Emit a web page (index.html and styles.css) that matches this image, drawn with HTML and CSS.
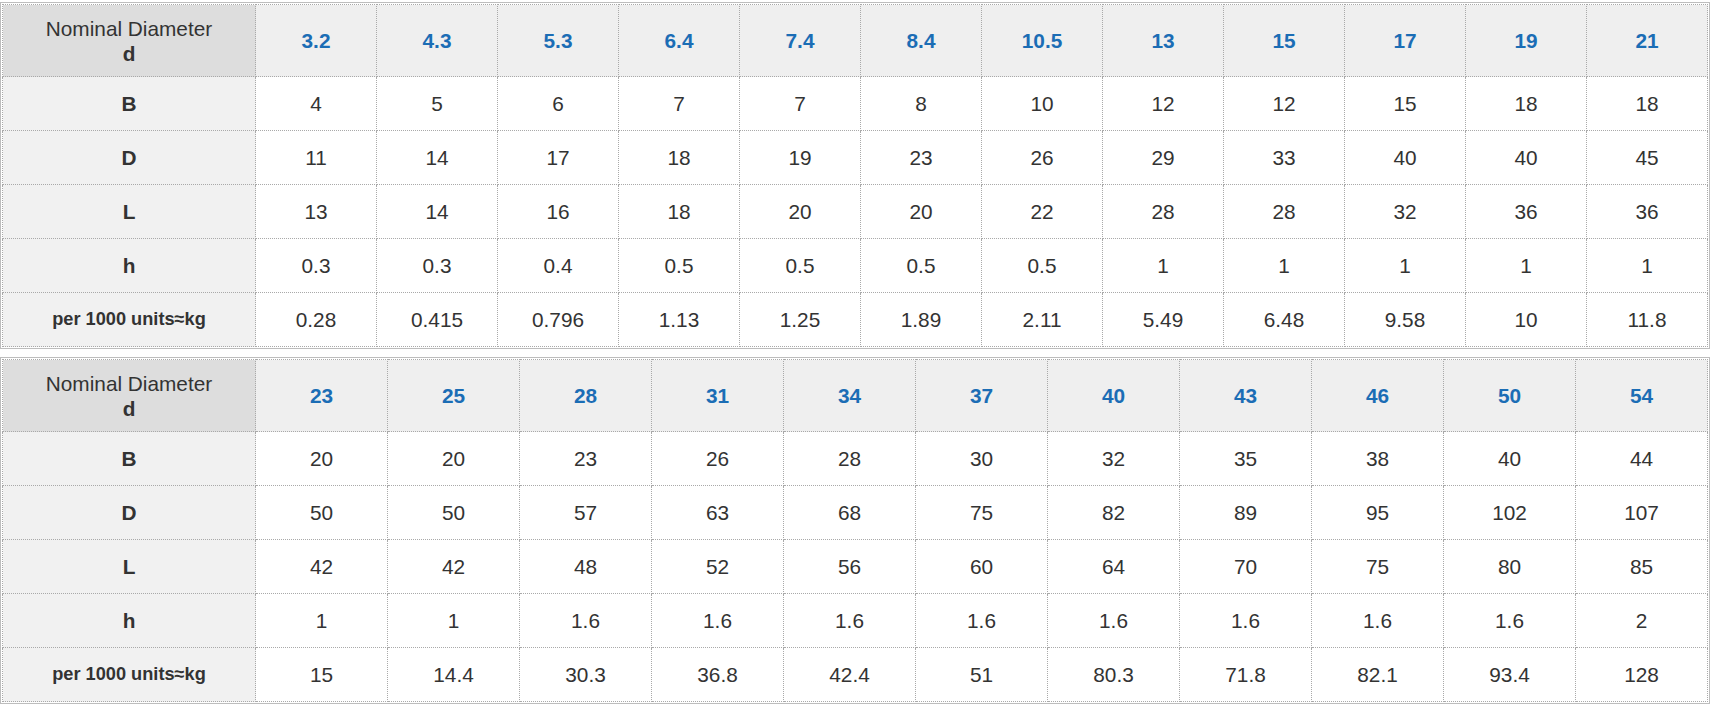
FILE: index.html
```html
<!DOCTYPE html>
<html>
<head>
<meta charset="utf-8">
<link rel="stylesheet" href="styles.css">
</head>
<body>
<div class="page">
  <div class="frame">
    <table class="spec t12">
      <colgroup><col class="first"></colgroup>
      <tr class="head">
        <th class="corner">Nominal Diameter<br><b>d</b></th>
        <th>3.2</th><th>4.3</th><th>5.3</th><th>6.4</th><th>7.4</th><th>8.4</th><th>10.5</th><th>13</th><th>15</th><th>17</th><th>19</th><th>21</th>
      </tr>
      <tr><th class="label">B</th><td>4</td><td>5</td><td>6</td><td>7</td><td>7</td><td>8</td><td>10</td><td>12</td><td>12</td><td>15</td><td>18</td><td>18</td></tr>
      <tr><th class="label">D</th><td>11</td><td>14</td><td>17</td><td>18</td><td>19</td><td>23</td><td>26</td><td>29</td><td>33</td><td>40</td><td>40</td><td>45</td></tr>
      <tr><th class="label">L</th><td>13</td><td>14</td><td>16</td><td>18</td><td>20</td><td>20</td><td>22</td><td>28</td><td>28</td><td>32</td><td>36</td><td>36</td></tr>
      <tr><th class="label">h</th><td>0.3</td><td>0.3</td><td>0.4</td><td>0.5</td><td>0.5</td><td>0.5</td><td>0.5</td><td>1</td><td>1</td><td>1</td><td>1</td><td>1</td></tr>
      <tr><th class="label small">per 1000 units≈kg</th><td>0.28</td><td>0.415</td><td>0.796</td><td>1.13</td><td>1.25</td><td>1.89</td><td>2.11</td><td>5.49</td><td>6.48</td><td>9.58</td><td>10</td><td>11.8</td></tr>
    </table>
  </div>
  <div class="frame">
    <table class="spec t11">
      <colgroup><col class="first"></colgroup>
      <tr class="head">
        <th class="corner">Nominal Diameter<br><b>d</b></th>
        <th>23</th><th>25</th><th>28</th><th>31</th><th>34</th><th>37</th><th>40</th><th>43</th><th>46</th><th>50</th><th>54</th>
      </tr>
      <tr><th class="label">B</th><td>20</td><td>20</td><td>23</td><td>26</td><td>28</td><td>30</td><td>32</td><td>35</td><td>38</td><td>40</td><td>44</td></tr>
      <tr><th class="label">D</th><td>50</td><td>50</td><td>57</td><td>63</td><td>68</td><td>75</td><td>82</td><td>89</td><td>95</td><td>102</td><td>107</td></tr>
      <tr><th class="label">L</th><td>42</td><td>42</td><td>48</td><td>52</td><td>56</td><td>60</td><td>64</td><td>70</td><td>75</td><td>80</td><td>85</td></tr>
      <tr><th class="label">h</th><td>1</td><td>1</td><td>1.6</td><td>1.6</td><td>1.6</td><td>1.6</td><td>1.6</td><td>1.6</td><td>1.6</td><td>1.6</td><td>2</td></tr>
      <tr><th class="label small">per 1000 units≈kg</th><td>15</td><td>14.4</td><td>30.3</td><td>36.8</td><td>42.4</td><td>51</td><td>80.3</td><td>71.8</td><td>82.1</td><td>93.4</td><td>128</td></tr>
    </table>
  </div>
</div>
</body>
</html>
```

FILE: styles.css
```css
html, body {
  margin: 0;
  padding: 0;
  background: #ffffff;
}

.page {
  padding-top: 2px;
  width: 1710px;
  display: flex;
  flex-direction: column;
  gap: 8px;
}

.frame {
  border: 1px solid #bdbdbd;
  padding: 1px;
  background: #ffffff;
}

.spec {
  width: 100%;
  border-collapse: collapse;
  table-layout: fixed;
  font-family: "Liberation Sans", Arial, sans-serif;
  font-size: 20.8px;
  color: #333333;
}

.spec col.first {
  width: 253px;
}

.spec th,
.spec td {
  border: 1px dotted #a9a9a9;
  text-align: center;
  vertical-align: middle;
  padding: 0;
  line-height: 25px;
}

.spec tr {
  height: 54px;
}

.spec tr.head {
  height: 72px;
}

.spec tr.head th {
  background: #efefef;
  color: #1b6db5;
  font-weight: bold;
}

.spec tr.head th.corner {
  background: #dddddd;
  color: #333333;
  font-weight: normal;
}

.spec tr.head th.corner b {
  font-weight: bold;
}

.spec th.label {
  background: #f1f1f1;
  font-weight: bold;
  color: #333333;
}

.spec th.label.small {
  font-size: 18.2px;
}

.spec td {
  background: #ffffff;
}
```
